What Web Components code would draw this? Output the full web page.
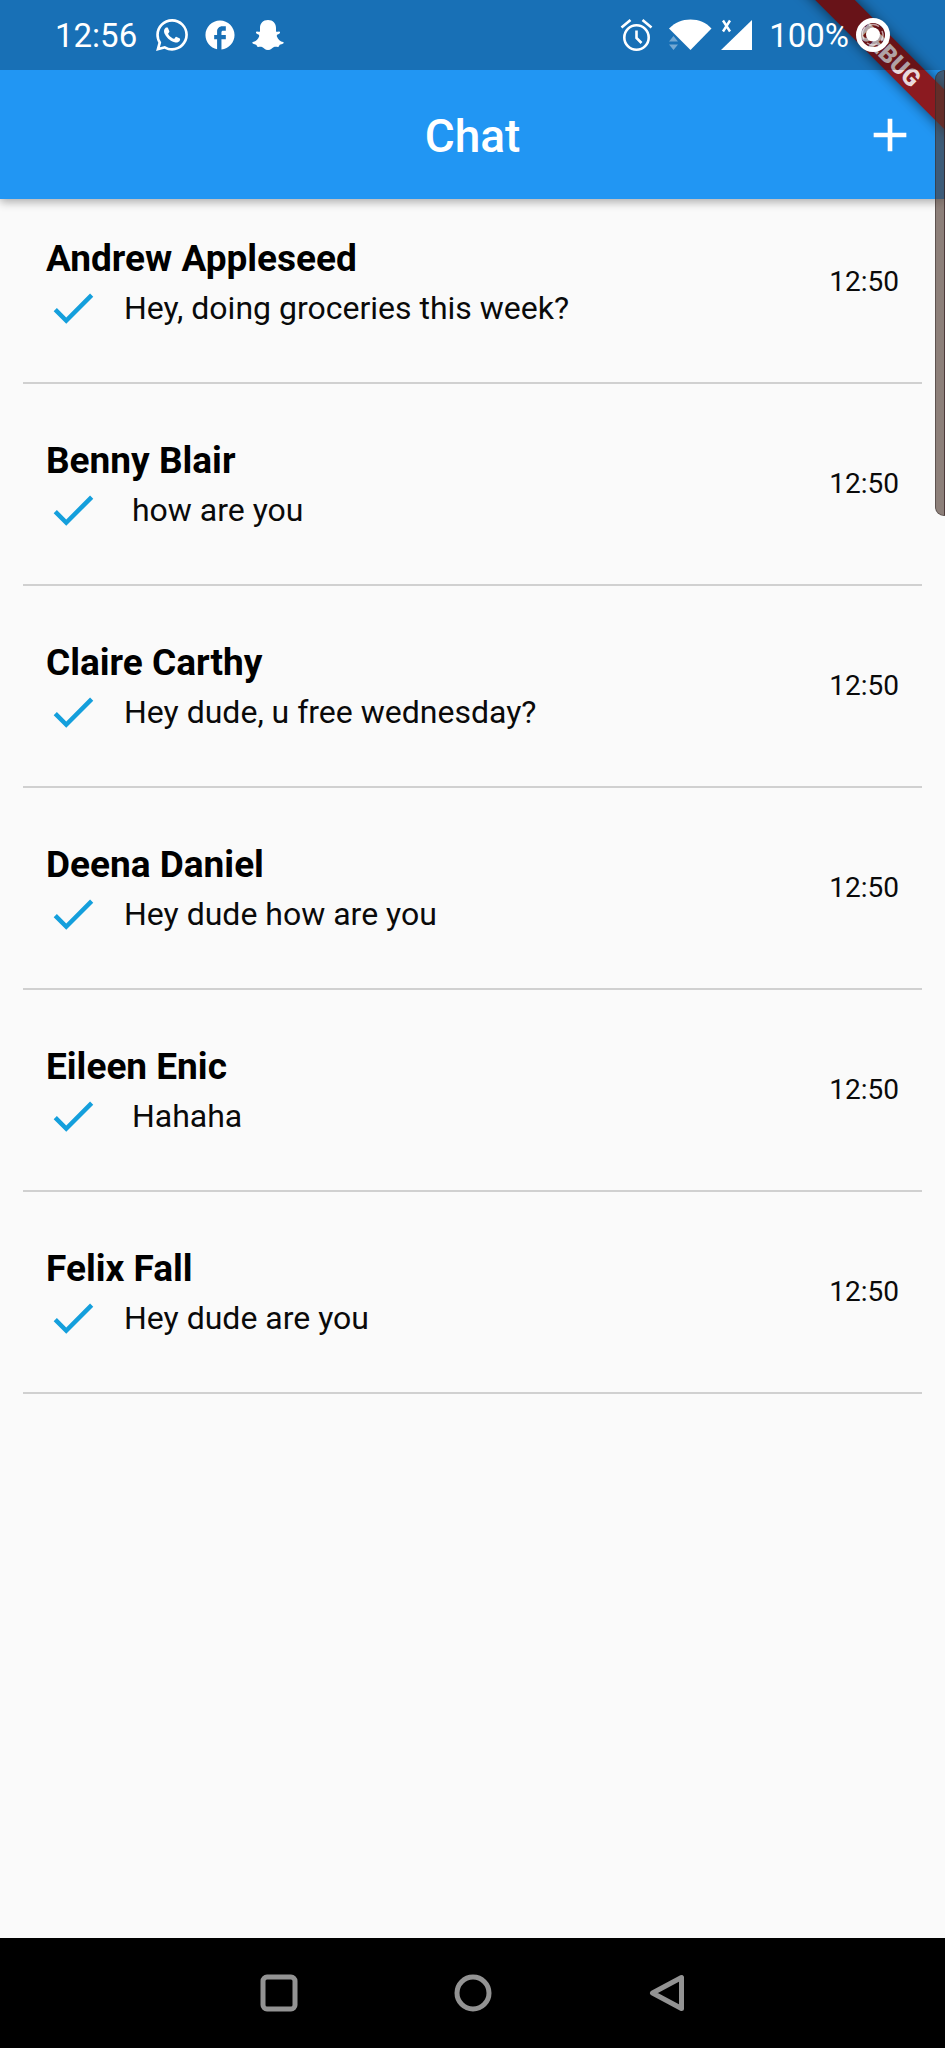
<!DOCTYPE html>
<html lang="en">
<head>
<meta charset="utf-8">
<meta name="viewport" content="width=device-width, initial-scale=1">
<title>Chat</title>
<style>
  body { margin: 0; background: #fafafa; font-family: Roboto, "Liberation Sans", sans-serif; }
</style>
</head>
<body>
<chat-screen></chat-screen>

<template id="status-bar">
  <style>
    :host { display: flex; align-items: center; justify-content: space-between; position: relative; z-index: 2; height: 70px; padding: 0 54px 0 55px; box-sizing: border-box; background: rgba(0,0,0,.25); color: #fff; font-size: 33px; line-height: 40px; }
    div { display: flex; align-items: center; }
    time, span { padding-top: 2px; }
    svg { display: block; fill: currentColor; }
    .apps { gap: 16px; margin-left: 19px; }
    .alarm { margin-right: 16px; }
    .wifi { margin-right: 8px; }
    .signal { margin-right: 16px; }
    .ring { margin-left: 6px; }
  </style>
  <div>
    <time>12:56</time>
    <div class="apps">
      <svg width="32" height="32" viewBox="2 2 20 20"><path d="M12.04 2C6.58 2 2.13 6.45 2.13 11.91c0 1.75.46 3.45 1.32 4.95L2.05 22l5.25-1.38c1.45.79 3.08 1.21 4.74 1.21 5.46 0 9.91-4.45 9.91-9.91 0-2.65-1.03-5.14-2.9-7.01A9.82 9.82 0 0 0 12.04 2m.01 1.67c2.2 0 4.26.86 5.82 2.42a8.23 8.23 0 0 1 2.41 5.83c0 4.54-3.7 8.23-8.24 8.23-1.48 0-2.93-.39-4.19-1.15l-.3-.17-3.12.82.83-3.04-.2-.32a8.19 8.19 0 0 1-1.26-4.38c.01-4.54 3.7-8.24 8.25-8.24M8.53 7.33c-.16 0-.43.06-.66.31-.22.25-.87.86-.87 2.07 0 1.22.89 2.39 1 2.56.14.17 1.76 2.67 4.25 3.73.59.27 1.05.42 1.41.53.59.19 1.13.16 1.56.1.48-.07 1.46-.6 1.67-1.18s.21-1.07.15-1.18c-.07-.1-.23-.16-.48-.27-.25-.14-1.47-.74-1.69-.82-.23-.08-.37-.12-.56.12-.16.25-.64.81-.78.97-.15.17-.29.19-.53.07-.26-.13-1.06-.39-2-1.23-.74-.66-1.23-1.47-1.38-1.72-.12-.24-.01-.39.11-.5.11-.11.27-.29.37-.44.13-.14.17-.25.25-.41.08-.17.04-.31-.02-.43-.06-.11-.56-1.35-.77-1.84-.2-.48-.4-.42-.56-.43-.14 0-.3-.01-.47-.01"/></svg>
      <svg width="32" height="32" viewBox="1 1 22 22"><path d="M22 12c0-5.52-4.48-10-10-10S2 6.48 2 12c0 4.84 3.44 8.87 8 9.8V15H8v-3h2V9.5C10 7.57 11.57 6 13.5 6H16v3h-2c-.55 0-1 .45-1 1v2h3v3h-3v6.95c5.05-.5 9-4.76 9-9.95z"/></svg>
      <svg width="32" height="32" viewBox="0 0 32 32"><path d="M16 1c5 0 8 3.500 8 8v3.500c1.200.600 2.300-.400 3.400 0 1 .400.800 1.700-.300 2.300-1.300.700-2.700 1-2.200 2.600 1 3 3.600 5 6.200 5.700.900.300.700 1.300-.200 1.700-1.200.600-2.700.700-3.400 1.100-.400.500-.2 1.600-1 1.900-1.200.300-2.800-.4-4.500.2-1.700.8-3 3-6 3s-4.300-2.200-6-3c-1.700-.6-3.300.1-4.500-.2-.8-.3-.6-1.400-1-1.900-.7-.4-2.200-.5-3.400-1.100-.9-.4-1.100-1.400-.2-1.700 2.600-.7 5.200-2.700 6.200-5.700.5-1.600-.9-1.900-2.200-2.600-1.100-.6-1.300-1.900-.3-2.300 1.100-.4 2.200.6 3.400 0V9c0-4.500 3-8 8-8z"/></svg>
    </div>
  </div>
  <div>
    <svg class="alarm" width="33" height="34" viewBox="0 0 33 34" style="fill:none" stroke="currentColor" stroke-width="2.600"><circle cx="16.500" cy="19.500" r="12.200"/><path d="M16.500 12.500v7.500l5 5M1.500 9.500l9-7.500M31.500 9.500l-9-7.500"/></svg>
    <svg class="wifi" width="44" height="32" viewBox="0 0 44 32"><path d="M0 9.500C6 3.500 13 .500 21.500.500S37 3.500 42.500 9.500L21.500 31z"/><path opacity=".4" d="M0 22.500l4.500-5.500 4.500 5.500zM0 25.500h9L4.500 31z"/></svg>
    <svg class="signal" width="32" height="32" viewBox="0 0 32 32"><path d="M31 1v30H0z"/><path d="M2 1.500l7 11M9 1.500l-7 11" stroke="currentColor" stroke-width="2.400"/></svg>
    <span>100%</span>
    <svg class="ring" width="36" height="36" viewBox="0 0 36 36"><circle cx="18" cy="18" r="14.500" fill="none" stroke="currentColor" stroke-width="5"/><circle cx="18" cy="17.500" r="7"/><path d="M9 22a10 10 0 0 1 1-12M14 8.500a10 10 0 0 1 10 1M27 14a10 10 0 0 1-1 10M22 27a10 10 0 0 1-10-1" fill="none" stroke="currentColor" stroke-width="1.500" opacity=".6"/></svg>
  </div>
</template>

<template id="app-bar">
  <style>
    :host { display: grid; grid-template-columns: 1fr auto 1fr; align-items: center; height: 129px; padding: 0 27px; color: #fff; }
    h1 { grid-column: 2; margin: 0; padding-top: 2px; font-size: 46px; line-height: 54px; font-weight: 500; }
    button { grid-column: 3; justify-self: end; padding: 0; border: 0; background: none; color: inherit; }
    svg { display: block; fill: currentColor; }
  </style>
  <h1><slot></slot></h1>
  <button type="button" aria-label="New chat"><svg width="56" height="56" viewBox="0 0 24 24"><path d="M19 13h-6v6h-2v-6H5v-2h6V5h2v6h6v2z"/></svg></button>
</template>

<template id="debug-ribbon">
  <style>
    :host { display: block; position: absolute; z-index: 1; top: 0; right: 0; }
    svg { display: block; }
    text { font-size: 24px; font-weight: 900; fill: #ead9dc; text-anchor: middle; }
  </style>
  <svg width="160" height="160" viewBox="0 0 160 160">
    <g transform="translate(105 55) rotate(45)">
      <rect x="-120" y="-14" width="240" height="28" fill="#8b1a20" style="filter:drop-shadow(0 0 7px rgba(0,0,0,.6))"/>
      <text y="9">DEBUG</text>
    </g>
  </svg>
</template>

<template id="chat-row">
  <style>
    :host { display: block; padding: 0 23px; }
    a { display: flex; justify-content: space-between; padding: 54px 23px 47px; border-bottom: 2px solid #d0d0d0; color: #0a0a0a; text-decoration: none; }
    :host(:first-of-type) a { padding-top: 37px; }
    .name { font-size: 37px; line-height: 45px; font-weight: 700; color: #000; }
    .message { display: flex; gap: 24px; font-size: 32px; line-height: 54px; white-space: pre; }
    svg { display: block; fill: #149fdc; }
    .time { margin-top: 29px; font-size: 28px; line-height: 33px; }
  </style>
  <a href="#"><div><div class="name"><slot name="name"></slot></div><div class="message"><svg width="54" height="54" viewBox="0 0 24 24"><path d="M9 16.170L4.830 12l-1.420 1.410L9 19 21 7l-1.410-1.410z"/></svg><slot></slot></div></div><div class="time"><slot name="time"></slot></div></a>
</template>

<template id="nav-bar">
  <style>
    :host { display: flex; justify-content: center; height: 110px; background: #000; }
    button { display: flex; align-items: center; justify-content: center; width: 20.5%; padding: 0; border: 0; background: none; color: #939393; }
    svg { display: block; fill: none; stroke: currentColor; stroke-width: 5; stroke-linejoin: round; }
  </style>
  <button type="button" aria-label="Recent apps"><svg width="38" height="38" viewBox="0 0 38 38"><rect x="3" y="3" width="32" height="32" rx="4"/></svg></button>
  <button type="button" aria-label="Home"><svg width="38" height="38" viewBox="0 0 38 38"><circle cx="19" cy="19" r="16"/></svg></button>
  <button type="button" aria-label="Back"><svg width="38" height="38" viewBox="0 0 38 38"><path d="M34.500 3.500v31L5.500 19z"/></svg></button>
</template>

<template id="chat-screen">
  <style>
    :host { display: flex; flex-direction: column; position: relative; min-height: 100vh; overflow: hidden; background: #fafafa; }
    header { position: relative; background: #2196f3; box-shadow: 0 3px 9px rgba(0,0,0,.32); }
    main { flex: 1; }
    .edge { position: absolute; z-index: 3; top: 70px; right: 0; width: 10px; height: 446px; box-sizing: border-box; border: 1px solid rgba(50,40,40,.5); border-right-color: rgba(50,30,30,.7); border-radius: 9px 0 0 9px; background: rgba(77,57,48,.63); }
  </style>
  <header>
    <status-bar></status-bar>
    <app-bar>Chat</app-bar>
    <debug-ribbon></debug-ribbon>
  </header>
  <main>
    <chat-row><span slot="name">Andrew Appleseed</span><span>Hey, doing groceries this week?</span><time slot="time">12:50</time></chat-row>
    <chat-row><span slot="name">Benny Blair</span><span> how are you</span><time slot="time">12:50</time></chat-row>
    <chat-row><span slot="name">Claire Carthy</span><span>Hey dude, u free wednesday?</span><time slot="time">12:50</time></chat-row>
    <chat-row><span slot="name">Deena Daniel</span><span>Hey dude how are you</span><time slot="time">12:50</time></chat-row>
    <chat-row><span slot="name">Eileen Enic</span><span> Hahaha</span><time slot="time">12:50</time></chat-row>
    <chat-row><span slot="name">Felix Fall</span><span>Hey dude are you</span><time slot="time">12:50</time></chat-row>
  </main>
  <nav-bar></nav-bar>
  <div class="edge"></div>
</template>

<script>
  class TemplateElement extends HTMLElement {
    constructor() {
      super();
      const template = document.getElementById(this.localName);
      this.attachShadow({ mode: 'open' }).append(template.content.cloneNode(true));
    }
  }
  customElements.define('status-bar', class StatusBar extends TemplateElement {});
  customElements.define('app-bar', class AppBar extends TemplateElement {});
  customElements.define('debug-ribbon', class DebugRibbon extends TemplateElement {});
  customElements.define('chat-row', class ChatRow extends TemplateElement {});
  customElements.define('nav-bar', class NavBar extends TemplateElement {});
  customElements.define('chat-screen', class ChatScreen extends TemplateElement {});
</script>
</body>
</html>
